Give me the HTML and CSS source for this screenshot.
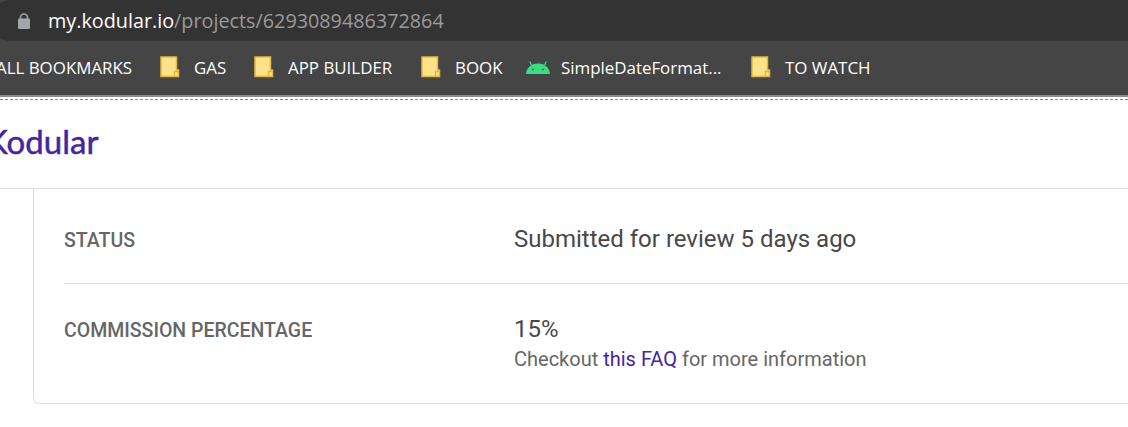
FILE: index.html
```html
<!DOCTYPE html>
<html lang="en">
<head>
	<meta charset="utf-8">
	<title>Kodular</title>
	<link rel="stylesheet" href="styles.css">
</head>
<body>
	<div class="address-bar">
		<div class="omnibox">
			<svg class="lock" width="14" height="16" viewBox="0 0 14 16">
				<path d="M3.500 6V4.300a3.500 3.300 0 0 1 7 0V6" fill="none" stroke="#a4a6ab" stroke-width="1.600"/>
				<rect x="1" y="5.500" width="12" height="10.500" rx="1.200" fill="#a4a6ab"/>
			</svg>
			<span class="host">my.kodular.io</span><span class="path">/projects/6293089486372864</span>
		</div>
	</div>
	<div class="bookmarks">
		<span class="bm-all">ALL BOOKMARKS</span>
		<span class="bm bm-gas"><svg class="folder" width="20" height="22" viewBox="0 0 20 22"><use href="#folder"/></svg>GAS</span>
		<span class="bm bm-app"><svg class="folder" width="20" height="22" viewBox="0 0 20 22"><use href="#folder"/></svg>APP BUILDER</span>
		<span class="bm bm-book"><svg class="folder" width="20" height="22" viewBox="0 0 20 22"><use href="#folder"/></svg>BOOK</span>
		<span class="bm bm-sdf">
			<svg class="android" width="24" height="16" viewBox="0 0 24 16">
				<path d="M0 15C.5 9 5 4.500 12 4.500S23.500 9 24 15Z" fill="#3ddc84"/>
				<path d="M5.500 6.500 3.800 2.500M18.500 6.500l1.700-4" stroke="#3ddc84" stroke-width="1.200" fill="none"/>
				<circle cx="7" cy="10.500" r="1" fill="#2a7a50"/>
				<circle cx="17" cy="10.500" r="1" fill="#2a7a50"/>
			</svg>SimpleDateFormat...</span>
		<span class="bm bm-watch"><svg class="folder" width="20" height="22" viewBox="0 0 20 22"><use href="#folder"/></svg>TO WATCH</span>
	</div>
	<svg class="defs" width="0" height="0">
		<symbol id="folder" viewBox="0 0 20 22">
			<path d="M1 1H16.500V14H18.500V20.500H1Z" fill="#ffe28a" stroke="#e2b93f" stroke-width="1.500"/>
			<path d="M14.500 20.500V15.500H18.500" fill="none" stroke="#e2b93f" stroke-width="1.500"/>
		</symbol>
	</svg>
	<div class="dash-line"></div>

	<header class="site-header">
		<span class="logo">Kodular</span>
	</header>

	<section class="card">
		<div class="row row-status">
			<div class="label">STATUS</div>
			<div class="value">Submitted for review 5 days ago</div>
		</div>
		<div class="row row-commission">
			<div class="label">COMMISSION PERCENTAGE</div>
			<div class="value">
				15%
				<div class="hint">Checkout <a href="#">this FAQ</a> for more information</div>
			</div>
		</div>
	</section>
</body>
</html>
```

FILE: styles.css
```css
* {
	margin: 0;
	padding: 0;
	box-sizing: border-box;
}
html, body {
	width: 1128px;
	height: 427px;
	overflow: hidden;
	background: #fff;
}
body {
	font-family: "Roboto", sans-serif;
}
.defs {
	display: block;
}

/* browser chrome */
.address-bar {
	height: 41px;
	background: #454545;
}
.omnibox {
	display: flex;
	align-items: center;
	width: 1160px;
	height: 41px;
	margin-left: -9px;
	padding-left: 26px;
	background: #333;
	border-radius: 20px;
	font-family: "Open Sans", sans-serif;
	font-size: 19.800px;
}
.lock {
	margin-right: 17px;
}
.host {
	color: #fff;
}
.path {
	color: #9a9a9a;
}
.bookmarks {
	display: flex;
	align-items: center;
	height: 56px;
	padding-bottom: 2px;
	background: #454545;
	border-bottom: 2px solid #8c8c8c;
	font-family: "Open Sans", sans-serif;
	font-size: 16.900px;
	color: #fff;
	white-space: nowrap;
}
.bm-all {
	margin-left: -4px;
	width: 164px;
}
.bm {
	display: flex;
	align-items: center;
}
.folder {
	margin-right: 14px;
}
.bm-gas {
	width: 94px;
}
.bm-app {
	width: 167px;
}
.bm-book {
	width: 105px;
}
.bm-sdf {
	width: 225px;
}
.android {
	margin-right: 11px;
}
.dash-line {
	height: 3px;
	border-bottom: 1px dashed #8a8a8a;
}

/* page */
.site-header {
	display: flex;
	align-items: center;
	height: 89px;
	padding-bottom: 6px;
	border-bottom: 1px solid #dcdcdc;
}
.logo {
	margin-left: -14px;
	font-family: "Lato", sans-serif;
	font-size: 33px;
	color: #45259f;
	-webkit-text-stroke: 0.5px #45259f;
}
.card {
	width: 1200px;
	height: 215px;
	margin-left: 33px;
	padding-left: 30px;
	border: 1px solid #dcdcdc;
	border-top: 0;
	border-radius: 0 0 0 6px;
}
.row {
	display: grid;
	grid-template-columns: 450px 1fr;
}
.row-status {
	align-items: center;
	height: 95px;
	padding-top: 6px;
	border-bottom: 1px solid #dcdcdc;
}
.row-status .label {
	padding-top: 4px;
}
.row-commission {
	padding-top: 31px;
}
.row-commission .label {
	padding-top: 2px;
}
.label {
	font-size: 19.500px;
	line-height: 28px;
	font-weight: 500;
	color: #666;
}
.value {
	font-size: 24px;
	line-height: 28px;
	color: #484848;
}
.hint {
	font-size: 20px;
	line-height: 32px;
	color: #666;
}
.hint a {
	color: #45259f;
	text-decoration: none;
}
```
